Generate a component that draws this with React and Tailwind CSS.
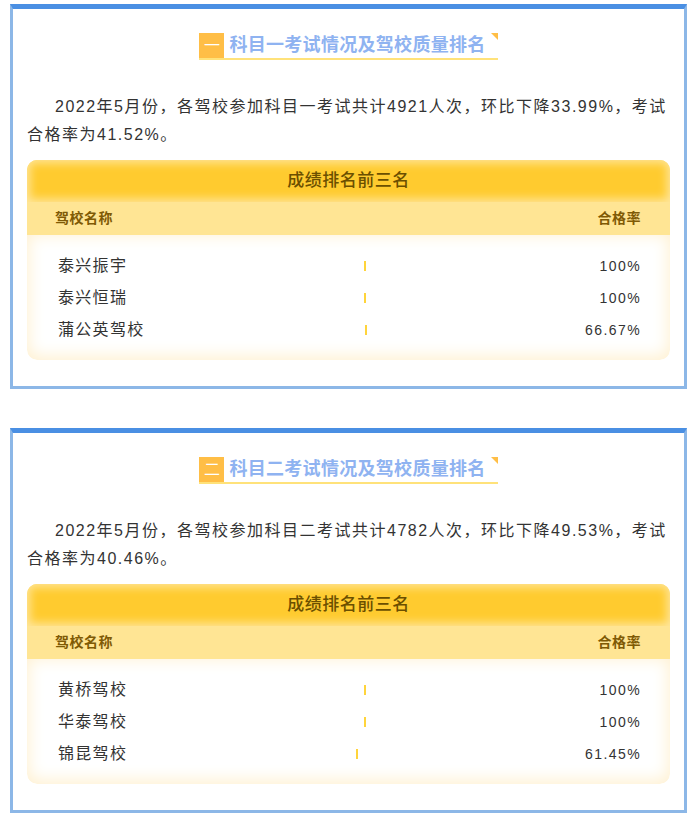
const sections = [
    {
        no: "一",
        title: "科目一考试情况及驾校质量排名",
        text: "2022年5月份，各驾校参加科目一考试共计4921人次，环比下降33.99%，考试合格率为41.52%。",
        rows: [
            { name: "泰兴振宇", rate: "100%", bar: "ml-[0px]" },
            { name: "泰兴恒瑞", rate: "100%", bar: "ml-[0px]" },
            { name: "蒲公英驾校", rate: "66.67%", bar: "ml-[1px]" },
        ],
    },
    {
        no: "二",
        title: "科目二考试情况及驾校质量排名",
        text: "2022年5月份，各驾校参加科目二考试共计4782人次，环比下降49.53%，考试合格率为40.46%。",
        rows: [
            { name: "黄桥驾校", rate: "100%", bar: "ml-[0px]" },
            { name: "华泰驾校", rate: "100%", bar: "ml-[0px]" },
            { name: "锦昆驾校", rate: "61.45%", bar: "-ml-[8px]" },
        ],
    },
];

const Heading = ({ no, title }) => (
    <div className="flex justify-center">
        <div className="relative inline-flex items-center border-b-[2px] border-[#ffe27a] pr-[12px]">
            <span className="flex h-[25px] w-[25px] items-center justify-center bg-[#ffbe46] text-[16px] text-white">
                {no}
            </span>
            <span className="ml-[5px] text-[18px] font-bold leading-[25px] tracking-[0.3px] text-[#8fb3f1]">
                {title}
            </span>
            {/* corner mark */}
            <span className="absolute right-0 top-0 h-0 w-0 border-l-[7px] border-t-[7px] border-l-transparent border-t-[#ffbe46]"></span>
        </div>
    </div>
);

const RankTable = ({ rows }) => (
    <div className="mt-[11px] overflow-hidden rounded-[10px]">
        <div className="flex h-[42px] items-center justify-center bg-[#ffcb2f] text-[17px] font-medium tracking-[0.5px] text-[#6b4f00] shadow-[inset_0_0_10px_3px_#ffe69c]">
            成绩排名前三名
        </div>
        <div className="flex h-[33px] items-center justify-between bg-[#ffe594] pl-[28px] pr-[29px] text-[14px] font-bold tracking-[0.5px] text-[#7f5a05]">
            <span>驾校名称</span>
            <span>合格率</span>
        </div>
        <div className="rounded-b-[10px] bg-white pb-[14px] pt-[15px] shadow-[inset_0_-2px_16px_2px_#fff1d2]">
            {rows.map((r) => (
                <div key={r.name} className="flex h-[32px] items-center pl-[31px] pr-[29px]">
                    <span className="w-[306px] text-[16px] tracking-[1.3px] text-[#333]">{r.name}</span>
                    <span className={`h-[10px] w-[1.5px] bg-[#ffd43b] ${r.bar}`}></span>
                    <span className="ml-auto text-[14px] tracking-[1.4px] text-[#333]">{r.rate}</span>
                </div>
            ))}
        </div>
    </div>
);

export default function App() {
    return (
        <div className="bg-white pb-[10px] pt-[4px] font-['Liberation_Sans','Noto_Sans_CJK_SC',sans-serif]">
            {sections.map((s, i) => (
                <div
                    key={s.no}
                    className={`ml-[10px] w-[677px] border-x-[3px] border-b-[3px] border-t-[5px] border-x-[#8cb7e7] border-b-[#8cb7e7] border-t-[#4a8fe3] bg-white px-[14px] pb-[26px] pt-[24px] ${i > 0 ? "mt-[39px]" : ""}`}
                >
                    <Heading no={s.no} title={s.title} />
                    <p className="mt-[33px] indent-[28px] text-[16px] leading-[28px] tracking-[1.5px] text-[#333]">
                        {s.text}
                    </p>
                    <RankTable rows={s.rows} />
                </div>
            ))}
        </div>
    );
}
